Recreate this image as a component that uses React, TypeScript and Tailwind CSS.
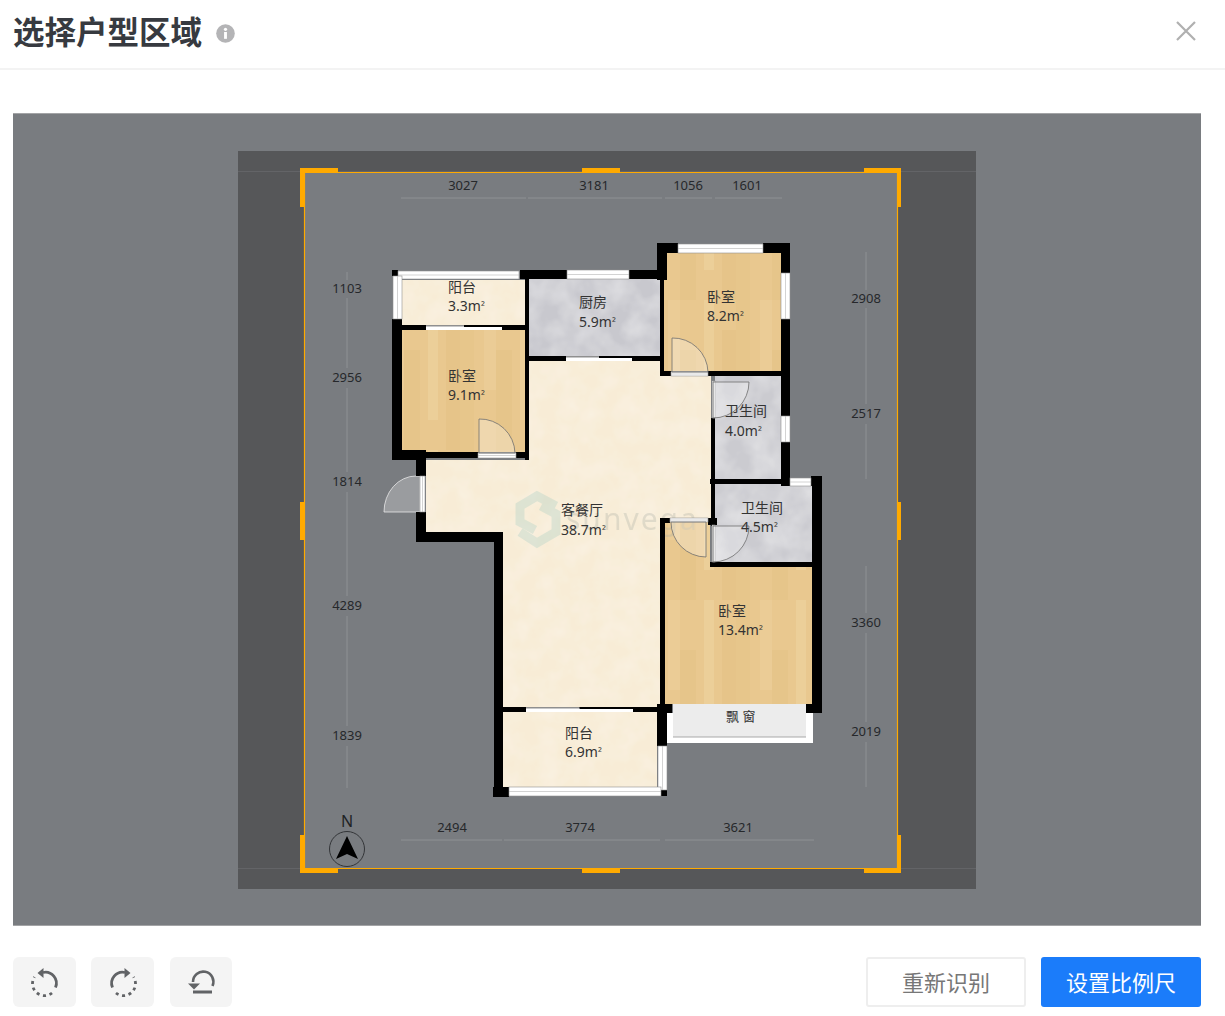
const walls = [
  [392, 270, 398, 276], [392, 319, 402, 460], [392, 450, 426, 460], [416, 450, 426, 476], [416, 512, 426, 542],
  [416, 532, 503, 542], [494, 532, 503, 797], [493, 787, 509, 797], [520, 270, 567, 279], [629, 270, 667, 279],
  [525, 270, 529, 460], [402, 325, 426, 330], [502, 325, 525, 330], [529, 356, 566, 361], [632, 356, 660, 361],
  [516, 452, 529, 458], [426, 452, 478, 458], [660, 253, 664, 376], [657, 243, 667, 280], [657, 243, 678, 253],
  [763, 243, 790, 253], [781, 243, 790, 273], [781, 319, 790, 416], [781, 442, 790, 486], [660, 371, 671, 376],
  [708, 371, 790, 376], [711, 418, 715, 526], [710, 479, 790, 484], [811, 476, 822, 486], [812, 476, 822, 713],
  [710, 562, 812, 567], [708, 518, 717, 525], [660, 518, 670, 523], [660, 518, 665, 705], [657, 704, 672, 713],
  [806, 704, 822, 713], [503, 707, 526, 712], [633, 707, 657, 712], [657, 704, 667, 746], [661, 790, 667, 796],
];

const windows = [
  [398, 271, 121, 8], [393, 276, 9, 43], [567, 270, 62, 9], [678, 244, 85, 9],
  [781, 273, 9, 46], [781, 416, 9, 26], [790, 478, 21, 8], [658, 746, 9, 44], [509, 787, 152, 9],
  [478, 453, 38, 5], [671, 372, 37, 4], [420, 476, 5, 36], [712, 381, 3, 37], [712, 525, 3, 37], [670, 518, 38, 4],
];

// sliding doors: [x, y, w, h], the right half of each has a dark rail on top
const sliders = [
  [426, 326, 76, 4], [566, 357, 66, 4], [526, 708, 107, 4],
];

const doors = [
  'M479 419 A35 35 0 0 1 515 453 L479 453 Z',
  'M672 338 A35 35 0 0 1 708 372 L672 372 Z',
  'M749 382 A36 36 0 0 1 713 418 L713 382 Z',
  'M749 526 A36 36 0 0 1 713 562 L713 526 Z',
  'M671 522 A35 35 0 0 0 706 557 L706 522 Z',
];

const rooms = [
  { name: '阳台', area: '3.3', x: 448, y: 292, y2: 311 },
  { name: '厨房', area: '5.9', x: 579, y: 307, y2: 327 },
  { name: '卧室', area: '8.2', x: 707, y: 302, y2: 321 },
  { name: '卧室', area: '9.1', x: 448, y: 381, y2: 400 },
  { name: '卫生间', area: '4.0', x: 725, y: 416, y2: 436 },
  { name: '卫生间', area: '4.5', x: 741, y: 513, y2: 532 },
  { name: '客餐厅', area: '38.7', x: 561, y: 515, y2: 535 },
  { name: '卧室', area: '13.4', x: 718, y: 616, y2: 635 },
  { name: '阳台', area: '6.9', x: 565, y: 738, y2: 757 },
];

const sizes = [
  ['3027', 463, 190], ['3181', 594, 190], ['1056', 688, 190], ['1601', 747, 190],
  ['1103', 347, 293], ['2956', 347, 382], ['1814', 347, 486], ['4289', 347, 610], ['1839', 347, 740],
  ['2908', 866, 303], ['2517', 866, 418], ['3360', 866, 627], ['2019', 866, 736],
  ['2494', 452, 832], ['3774', 580, 832], ['3621', 738, 832],
] as const;

const dimLines = [
  'M401 198H526M528 198H662M665 198H712M715 198H782',
  'M401 840H502M504 840H660M665 840H814',
  'M347 272V280M347 298V368M347 388V472M347 492V596M347 616V726M347 746V788',
  'M866 252V290M866 308V404M866 424V479M866 566V613M866 633V722M866 742V787',
];

// crop frame handles
const handles = [
  [300, 168, 38, 5], [582, 168, 38, 5], [864, 168, 37, 5],
  [300, 869, 38, 4], [582, 869, 38, 4], [864, 869, 37, 4],
  [300, 168, 5, 39], [300, 502, 5, 38], [300, 835, 5, 38],
  [897, 168, 4, 39], [897, 502, 4, 38], [897, 835, 4, 38],
];

const FloorPlan = () => (
  <svg
    viewBox="238 151 738 738"
    className="w-[738px] h-[738px] font-['Noto_Sans','Noto_Sans_CJK_SC',sans-serif]"
  >
    <defs>
      <pattern id="wood" width="92" height="150" patternUnits="userSpaceOnUse">
        <rect width="92" height="150" fill="#e9c88f" />
        <rect x="0" width="14" height="150" fill="#e7c68b" />
        <rect x="24" width="12" height="90" fill="#ebcc96" />
        <rect x="36" y="50" width="16" height="100" fill="#e6c58a" />
        <rect x="60" width="10" height="120" fill="#eccf99" />
        <rect x="78" y="30" width="14" height="120" fill="#e6c489" />
      </pattern>
      <filter id="stone" x="0" y="0" width="100%" height="100%">
        <feTurbulence type="fractalNoise" baseFrequency="0.04" numOctaves="3" seed="4" result="n" />
        <feColorMatrix
          in="n"
          values="0 0 0 0 1  0 0 0 0 1  0 0 0 0 1  0.6 0 0 0 -0.18"
          result="w"
        />
        <feComposite in="w" in2="SourceGraphic" operator="in" result="c" />
        <feMerge>
          <feMergeNode in="SourceGraphic" />
          <feMergeNode in="c" />
        </feMerge>
      </filter>
      <filter id="marble" x="0" y="0" width="100%" height="100%">
        <feTurbulence type="fractalNoise" baseFrequency="0.05" numOctaves="3" seed="9" result="n" />
        <feColorMatrix
          in="n"
          values="0 0 0 0 1  0 0 0 0 1  0 0 0 0 1  0.4 0 0 0 -0.12"
          result="w"
        />
        <feComposite in="w" in2="SourceGraphic" operator="in" result="c" />
        <feMerge>
          <feMergeNode in="SourceGraphic" />
          <feMergeNode in="c" />
        </feMerge>
      </filter>
    </defs>

    {/* dimmed image outside the crop */}
    <rect x="238" y="151" width="738" height="738" fill="#565759" />
    <path d="M238 171.5H976M238 868.5H976" stroke="#636467" strokeWidth="1" />
    <rect x="304" y="172" width="594" height="697" fill="#797c80" />

    {/* floors */}
    <g filter="url(#marble)">
      <path
        d="M529 361H660V376H711V518H660V707H503V532H426V460H525L529 457Z"
        fill="#f8ecd6"
      />
      <rect x="402" y="280" width="123" height="45" fill="#f8ecd6" />
      <rect x="503" y="712" width="154" height="75" fill="#f8ecd6" />
    </g>
    <g filter="url(#stone)">
      <rect x="529" y="279" width="131" height="77" fill="#c8c8ce" />
      <rect x="715" y="376" width="66" height="103" fill="#cbcbd0" />
      <rect x="715" y="484" width="97" height="78" fill="#cbcbd0" />
    </g>
    <path d="M402 329H525V452H402Z" fill="url(#wood)" />
    <path d="M667 253H781V371H664V280H667Z" fill="url(#wood)" />
    <path d="M665 522H710V567H812V704H665Z" fill="url(#wood)" />

    {/* watermark */}
    <g fill="none" stroke="#8fc4bd" strokeWidth="9" opacity="0.25">
      <path d="M556 506L537 496L520 506V522L535 530" />
      <path d="M520 532L537 543L556 532V514L541 506" />
    </g>
    <text x="566" y="530" fontSize="30" fill="#a9ada3" opacity="0.3" letterSpacing="2">
      sunvega
    </text>

    {/* bay window */}
    <rect x="667" y="713" width="146" height="30" fill="#ffffff" />
    <rect x="673" y="704" width="133" height="33" fill="#ececec" />
    <path d="M673 737H806" stroke="#a9a9a9" strokeWidth="1" />
    <text x="726" y="721" fontSize="13" fill="#333333" xmlSpace="preserve">
      飘 窗
    </text>

    {/* entrance door */}
    <path d="M416 476A32 36 0 0 0 384 512H420V476Z" fill="#9a9c9f" stroke="#e8e8e8" strokeWidth="0.8" />

    {/* walls */}
    {walls.map(([x1, y1, x2, y2], i) => (
      <rect key={i} x={x1} y={y1} width={x2 - x1} height={y2 - y1} fill="#000000" />
    ))}

    {/* windows and door openings */}
    {windows.map(([x, y, w, h], i) => (
      <g key={i}>
        <rect x={x} y={y} width={w} height={h} fill="#ffffff" stroke="#8f8f8f" strokeWidth="0.6" />
        {w > h ? (
          <path d={`M${x} ${y + h / 2}H${x + w}`} stroke="#b5b5b5" strokeWidth="0.6" />
        ) : (
          <path d={`M${x + w / 2} ${y}V${y + h}`} stroke="#b5b5b5" strokeWidth="0.6" />
        )}
      </g>
    ))}
    {sliders.map(([x, y, w, h], i) => (
      <g key={i}>
        <rect x={x} y={y} width={w} height={h} fill="#ffffff" />
        <rect x={x} y={y - 1} width={w / 2} height={1.5} fill="#8f8f8f" />
        <rect x={x + w / 2} y={y - 1} width={w / 2} height={2} fill="#000000" />
      </g>
    ))}

    {/* door leaves */}
    {doors.map((d, i) => (
      <path key={i} d={d} fill="#ffffff" fillOpacity="0.28" stroke="#6f6f6f" strokeWidth="0.8" />
    ))}

    {/* dimensions */}
    {dimLines.map((d, i) => (
      <path key={i} d={d} stroke="#8f9194" strokeWidth="1" fill="none" />
    ))}
    {sizes.map(([label, x, y]) => (
      <text key={label} x={x} y={y} fontSize="13" fill="#26282b" textAnchor="middle">
        {label}
      </text>
    ))}

    {/* room labels */}
    {rooms.map((room, i) => (
      <g key={i} fontSize="14" fill="#333333">
        <text x={room.x} y={room.y}>
          {room.name}
        </text>
        <text x={room.x} y={room.y2}>
          {room.area}m<tspan fontSize="11" dy="-1">²</tspan>
        </text>
      </g>
    ))}

    {/* compass */}
    <text x="347" y="827" fontSize="16" fill="#202225" textAnchor="middle">
      N
    </text>
    <circle cx="347" cy="849" r="17.5" fill="none" stroke="#333538" strokeWidth="1" />
    <path d="M347 836L358 859L347 854L336 859Z" fill="#000000" />

    {/* crop frame */}
    <path
      d="M897.5 172.5H304.5V868.5H897.5V172.5"
      fill="none"
      stroke="#ffaa00"
      strokeWidth="1.2"
    />
    {handles.map(([x, y, w, h], i) => (
      <rect key={i} x={x} y={y} width={w} height={h} fill="#ffaa00" />
    ))}
  </svg>
);

const RotateLeft = () => (
  <svg viewBox="0 0 30 30" className="w-[30px] h-[30px]" fill="none" stroke="#616366" strokeWidth="2.8">
    <path d="M13 5.5A11 11 0 0 1 25.5 20.5" />
    <path d="M13.5 1L7.5 6L13.5 11Z" fill="#616366" stroke="none" />
    <path d="M22 26A12 12 0 0 1 4.5 10" strokeDasharray="3 3.6" />
  </svg>
);

const RotateRight = () => (
  <svg viewBox="0 0 30 30" className="w-[30px] h-[30px]" fill="none" stroke="#616366" strokeWidth="2.8">
    <path d="M17 5.5A11 11 0 0 0 4.5 20.5" />
    <path d="M16.5 1L22.5 6L16.5 11Z" fill="#616366" stroke="none" />
    <path d="M8 26A12 12 0 0 0 25.5 10" strokeDasharray="3 3.6" />
  </svg>
);

const ResetIcon = () => (
  <svg viewBox="0 0 30 30" className="w-[30px] h-[30px]" fill="none" stroke="#616366" strokeWidth="2.6">
    <path d="M7 15A10.2 10.2 0 1 1 26.5 19" />
    <path d="M2 16.5H14L8 22.5Z" fill="#616366" stroke="none" />
    <path d="M7 25H26" strokeWidth="3" />
  </svg>
);

const App = () => {
  return (
    <div className="w-[1225px] h-[1016px] bg-white overflow-hidden font-['Noto_Sans','Noto_Sans_CJK_SC',sans-serif]">
      <div className="h-[70px] pl-[13px] pr-[24px] flex items-center justify-between border-b-2 border-[#f3f3f3]">
        <div className="pb-[4px] flex items-center gap-[14px]">
          <h1 className="text-[31.5px] leading-none font-bold text-[#373a40]">选择户型区域</h1>
          <svg viewBox="0 0 20 20" className="mt-[2px] w-[19px] h-[19px]">
            <circle cx="10" cy="10" r="9.8" fill="#b4b4b6" />
            <circle cx="10" cy="5.6" r="1.7" fill="#ffffff" />
            <rect x="8.5" y="8.4" width="3" height="7.2" fill="#ffffff" />
          </svg>
        </div>
        <button className="mr-[3px] mb-[6px] text-[#b0b0b0]">
          <svg viewBox="0 0 24 24" className="w-6 h-6" fill="none" stroke="currentColor" strokeWidth="2.2">
            <path d="M3 3L21 21M21 3L3 21" />
          </svg>
        </button>
      </div>

      <div className="mt-[43px] ml-[13px] w-[1188px] h-[813px] pt-[1px] bg-[#797c80] border-y border-[#a3a4a6] flex items-center justify-center">
        <FloorPlan />
      </div>

      <div className="mt-[31px] ml-[13px] w-[1188px] flex items-center justify-between">
        <div className="flex gap-[15px]">
          <button className="w-[63px] h-[50px] rounded-[6px] bg-[#f4f4f4] flex items-center justify-center">
            <RotateLeft />
          </button>
          <button className="w-[63px] h-[50px] rounded-[6px] bg-[#f4f4f4] flex items-center justify-center">
            <RotateRight />
          </button>
          <button className="ml-[1px] w-[62px] h-[50px] rounded-[6px] bg-[#f4f4f4] flex items-center justify-center">
            <ResetIcon />
          </button>
        </div>
        <div className="flex gap-[15px]">
          <button className="w-[160px] h-[50px] rounded-[3px] border-2 border-[#eeeeee] bg-white text-[22px] text-[#777777]">
            重新识别
          </button>
          <button className="w-[160px] h-[50px] rounded-[3px] bg-[#1b7cfa] text-[22px] text-white">
            设置比例尺
          </button>
        </div>
      </div>
    </div>
  );
};

export default App;
